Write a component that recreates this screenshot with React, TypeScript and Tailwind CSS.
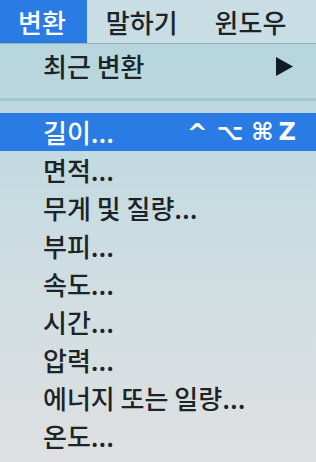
const font = { fontFamily: '"Noto Sans CJK KR", "Noto Sans", sans-serif' };

const items = [
  '면적...',
  '무게 및 질량...',
  '부피...',
  '속도...',
  '시간...',
  '압력...',
  '에너지 또는 일량...',
  '온도...',
  '전력...',
];

function MenuRow({ label }: { label: string }) {
  return (
    <div className="h-[38px] flex items-center pl-[43px] pr-5 text-[26px] font-medium text-[#1c2427] leading-none">
      {label}
    </div>
  );
}

export default function App() {
  return (
    <div
      className="w-[316px] h-[462px] overflow-hidden flex flex-col bg-gradient-to-b from-[#b1d3dc] via-[#cbdde2] to-[#dfe0e1]"
      style={font}
    >
      <div className="h-[43px] shrink-0 flex items-stretch bg-[#c8dee4] text-[26px] font-medium leading-none text-[#1c2427]">
        <div className="flex items-center pl-[18px] pr-[21px] bg-[#2a7be3] text-white">변환</div>
        <div className="flex items-center pl-[19px] pr-[17px]">말하기</div>
        <div className="flex items-center px-[20px]">윈도우</div>
      </div>
      <div className="h-px shrink-0 bg-[#90b2ba]" />

      <div className="pt-[3px]">
        <div className="h-[38px] flex items-center justify-between pl-[43px] pr-[23px] text-[26px] font-medium text-[#1c2427] leading-none">
          <span>최근 변환</span>
          <svg width="17" height="19" viewBox="0 0 17 19" className="shrink-0">
            <path d="M0 0 L17 9.5 L0 19 Z" fill="#0f1d22" />
          </svg>
        </div>
        <div className="h-[28px] flex flex-col justify-center">
          <div className="h-[3px] bg-[#a4c6cd]" />
        </div>

        <div className="h-[38px] flex items-center justify-between pl-[43px] pr-[20px] bg-[#2a7be3] text-white leading-none">
          <span className="text-[26px] font-medium">길이...</span>
          <span
            className="flex items-center font-bold leading-none"
            style={{ fontFamily: '"DejaVu Sans", sans-serif' }}
          >
            <span className="text-[25px]">^</span>
            <span className="text-[23px] ml-[9px]">⌥</span>
            <span className="text-[24px] ml-[8px]">⌘</span>
            <span className="text-[24px] ml-[5px]">Z</span>
          </span>
        </div>

        {items.map((label) => (
          <MenuRow key={label} label={label} />
        ))}
      </div>
    </div>
  );
}
